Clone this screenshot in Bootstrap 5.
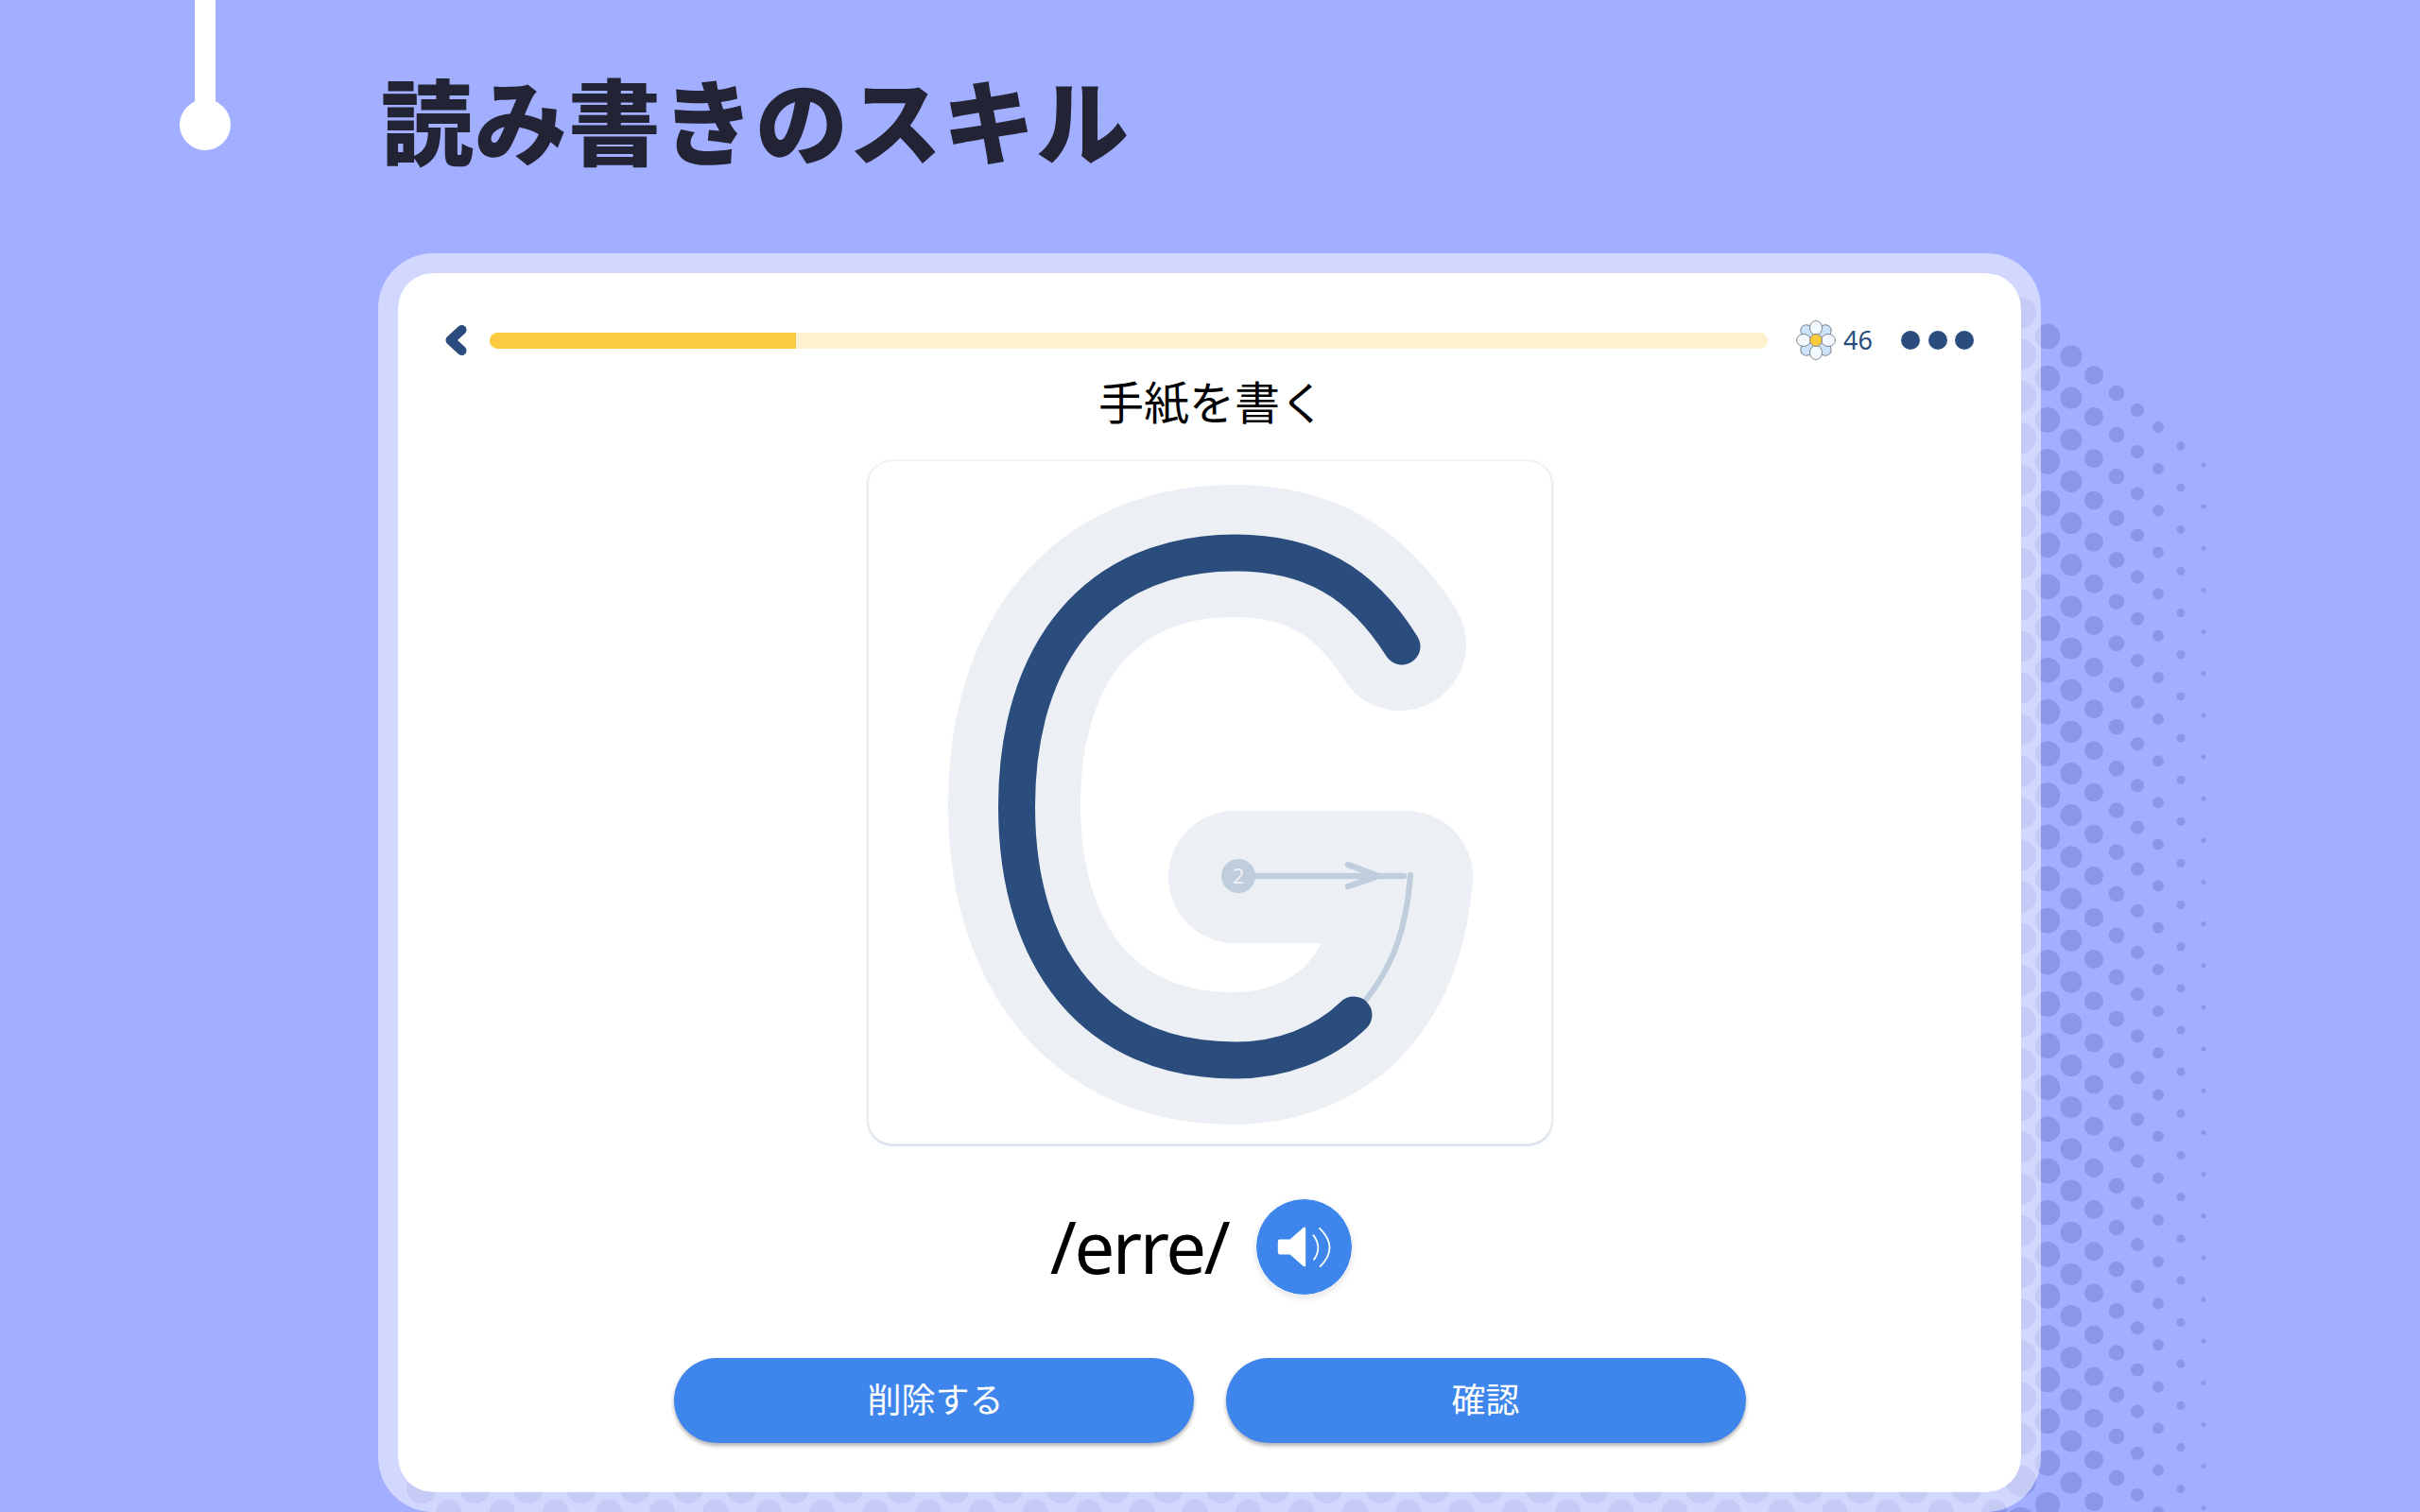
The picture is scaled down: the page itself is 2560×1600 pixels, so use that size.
<!DOCTYPE html>
<html lang="ja">
<head>
    <meta charset="UTF-8">
    <meta name="viewport" content="width=device-width, initial-scale=1.0">
    <title>読み書きのスキル</title>
    <link href="https://cdn.jsdelivr.net/npm/bootstrap@5.3.0/dist/css/bootstrap.min.css" rel="stylesheet">
    <style>
        body {
            background: #a2aeff;
            font-family: "Noto Sans", "Noto Sans CJK JP", sans-serif;
            overflow: hidden;
        }
        .page-wrap {
            position: relative;
            width: 2560px;
            height: 1600px;
            overflow: hidden;
        }
        .halftone {
            position: absolute;
            left: 0;
            top: 0;
        }
        .main-row {
            position: relative;
            padding-left: 190px;
            height: 1600px;
        }
        .timeline {
            width: 54px;
        }
        .timeline-line {
            width: 22px;
            height: 110px;
            background: #fff;
        }
        .timeline-dot {
            width: 54px;
            height: 54px;
            margin-top: -5px;
            background: #fff;
        }
        .right-col {
            margin-left: 156px;
            width: 1759px;
        }
        .page-title {
            height: 268px;
            padding: 69px 0 0 3px;
            margin: 0;
            font-family: "Noto Sans CJK JP", sans-serif;
            font-size: 98px;
            line-height: 110px;
            letter-spacing: 1px;
            font-weight: 900;
            color: #222436;
        }
        .panel {
            height: 1332px;
            border: 21px solid rgba(255, 255, 255, .5);
            border-radius: 58px;
            background: #fff;
            background-clip: padding-box;
            padding: 54px 50px 0 50px;
        }
        .top-bar {
            height: 34px;
        }
        .back-icon {
            margin-right: 24px;
        }
        .progress.lesson-progress {
            height: 17px;
            background: #fdf1cf;
            border-radius: 9px;
        }
        .lesson-progress .progress-bar {
            background: #fbca40;
        }
        .flower-icon {
            margin-left: 30px;
            margin-right: 8px;
        }
        .flower-count {
            width: 30px;
            font-size: 27px;
            line-height: 34px;
            color: #2a4d7e;
        }
        .more-dots {
            margin-left: 31px;
            gap: 8.5px;
        }
        .more-dots span {
            width: 20px;
            height: 20px;
            border-radius: 50%;
            background: #2a4d7e;
        }
        .exercise-title {
            margin: 19px 0 31px;
            padding-left: 5px;
            height: 60px;
            font-size: 48px;
            line-height: 60px;
            font-weight: 400;
            color: #000;
            text-align: center;
        }
        .trace-card {
            width: 724px;
            height: 724px;
            margin: 0 auto;
            border: 1px solid #edf1f5;
            border-radius: 26px;
            box-shadow: 0 1px 3px rgba(140, 165, 195, .6);
            overflow: hidden;
        }
        .trace-card svg {
            display: block;
            margin: -1px;
        }
        .sound-row {
            margin-top: 57px;
            height: 102px;
            padding-right: 17px;
        }
        .phonetic {
            font-size: 76px;
            line-height: 102px;
            letter-spacing: -2.500px;
            color: #000;
            margin-right: 29px;
        }
        .btn.sound-btn {
            width: 103px;
            height: 103px;
            padding: 0;
            border: 1px solid #fff;
            border-radius: 50%;
            background: #3e86eb;
            box-shadow: 0 3px 6px rgba(0, 0, 0, .1);
        }
        .action-row {
            margin-top: 67px;
            gap: 34px;
        }
        .btn.action-btn {
            width: 550px;
            height: 90px;
            padding: 0;
            border: 0;
            background: #3e86eb;
            color: #fff;
            font-size: 36px;
            line-height: 90px;
            box-shadow: 0 3px 4px rgba(0, 0, 0, .3);
        }
        .btn.action-btn:first-child {
            padding-left: 4px;
        }
    </style>
</head>
<body>
    <div class="page-wrap">
        <svg class="halftone" id="halftone" width="2560" height="1600" viewBox="0 0 2560 1600"></svg>

        <div class="main-row d-flex">
            <div class="timeline d-flex flex-column align-items-center">
                <div class="timeline-line"></div>
                <div class="timeline-dot rounded-circle"></div>
            </div>

            <div class="right-col">
                <h1 class="page-title">読み書きのスキル</h1>

                <div class="panel">
                    <div class="top-bar d-flex align-items-center">
                        <svg class="back-icon" width="23" height="34" viewBox="471 343 23 34">
                            <path d="M488.500 349 L476.500 360 L488.500 371" fill="none" stroke="#2a4d7e" stroke-width="10" stroke-linecap="round" stroke-linejoin="round"/>
                        </svg>
                        <div class="progress lesson-progress flex-grow-1">
                            <div class="progress-bar" style="width: 24%"></div>
                        </div>
                        <svg class="flower-icon" width="42" height="42" viewBox="-21 -21 42 42">
                            <g stroke="#7f8890" stroke-width="1">
                                <g fill="#cbe4fb">
                                    <ellipse cx="0" cy="-13" rx="6.500" ry="7.500" transform="rotate(45)"/>
                                    <ellipse cx="0" cy="-13" rx="6.500" ry="7.500" transform="rotate(135)"/>
                                    <ellipse cx="0" cy="-13" rx="6.500" ry="7.500" transform="rotate(225)"/>
                                    <ellipse cx="0" cy="-13" rx="6.500" ry="7.500" transform="rotate(315)"/>
                                </g>
                                <g fill="#f3f9ff">
                                    <ellipse cx="0" cy="-13" rx="6.500" ry="7.500"/>
                                    <ellipse cx="0" cy="-13" rx="6.500" ry="7.500" transform="rotate(90)"/>
                                    <ellipse cx="0" cy="-13" rx="6.500" ry="7.500" transform="rotate(180)"/>
                                    <ellipse cx="0" cy="-13" rx="6.500" ry="7.500" transform="rotate(270)"/>
                                </g>
                                <circle r="6.500" fill="#fbca40"/>
                            </g>
                        </svg>
                        <span class="flower-count">46</span>
                        <div class="more-dots d-flex">
                            <span></span><span></span><span></span>
                        </div>
                    </div>

                    <h2 class="exercise-title">手紙を書く</h2>

                    <div class="card trace-card">
                        <svg width="724" height="724" viewBox="918 487 724 724">
                            <g fill="none" stroke-linecap="round" stroke-linejoin="round">
                                <path d="M1481 682 C1438 613 1383 583 1305 583 C1158 583 1073 688 1073 851.500 C1073 1015 1158 1120 1305 1120 C1353 1120 1398 1103 1430 1072 C1463 1038 1483 990 1488 928 L1306 928" stroke="#ecf0f5" stroke-width="140"/>
                                <path d="M1445 1058 C1475 1020 1488 980 1492 926" stroke="#c0cddc" stroke-width="6"/>
                                <path d="M1310 927 H1485 M1426 915 L1458 927 L1426 938" stroke="#c0cddc" stroke-width="6.500"/>
                                <path d="M1483 684 C1440 615 1385 585 1307 585 C1160 585 1075.500 690 1075.500 853.500 C1075.500 1017 1160 1122 1307 1122 C1355 1122 1400 1105 1432 1074" stroke="#2a4d7e" stroke-width="39"/>
                            </g>
                            <circle cx="1310" cy="927" r="18" fill="#c0cddc"/>
                            <text x="1310" y="935" text-anchor="middle" font-size="22" font-family="Noto Sans" fill="#eef2f6">2</text>
                        </svg>
                    </div>

                    <div class="sound-row d-flex justify-content-center align-items-center">
                        <span class="phonetic">/erre/</span>
                        <button type="button" class="btn sound-btn d-flex align-items-center justify-content-center">
                            <svg width="102" height="102" viewBox="0 0 102 102">
                                <path d="M25 43.500 H36 L50 31 Q52.700 29 52.700 32 V71 Q52.700 74 50 72 L36 59.500 H25 Q23 59.500 23 57 V46 Q23 43.500 25 43.500Z" fill="#fff"/>
                                <path d="M61 39 Q70.600 52 61.700 65 M67.700 31.700 Q88.600 52 68.300 72.300" fill="none" stroke="#fff" stroke-width="1.800" stroke-linecap="round"/>
                            </svg>
                        </button>
                    </div>

                    <div class="action-row d-flex justify-content-center">
                        <button type="button" class="btn action-btn rounded-pill">削除する</button>
                        <button type="button" class="btn action-btn rounded-pill">確認</button>
                    </div>
                </div>
            </div>
        </div>
    </div>

    <script src="https://cdn.jsdelivr.net/npm/bootstrap@5.3.0/dist/js/bootstrap.bundle.min.js"></script>
    <script>
        // halftone columns right of the panel: x, first y, radius
        const columnas = [
            [2137.5, 331, 16.5], [2166, 356, 13.3], [2191, 377, 11.5], [2215, 397, 10],
            [2239, 416, 8.3], [2261, 434, 7], [2283, 452, 6], [2307, 472, 4.5], [2331, 492, 2.5]
        ];
        let circulos = '';
        columnas.forEach(([x, inicio, r]) => {
            for (let y = inicio; y < 1620; y += 44.15) {
                circulos += `<circle cx="${x}" cy="${y.toFixed(1)}" r="${r}"/>`;
            }
        });
        // two rows seen under the panel
        for (let i = 0; i < 30; i++) {
            circulos += `<circle cx="${(446 + i * 56.37).toFixed(1)}" cy="1575" r="16"/>`;
            circulos += `<circle cx="${(475 + i * 56.37).toFixed(1)}" cy="1600" r="13.5"/>`;
        }
        document.getElementById('halftone').innerHTML = `<g fill="#8b96e8">${circulos}</g>`;
    </script>
</body>
</html>
